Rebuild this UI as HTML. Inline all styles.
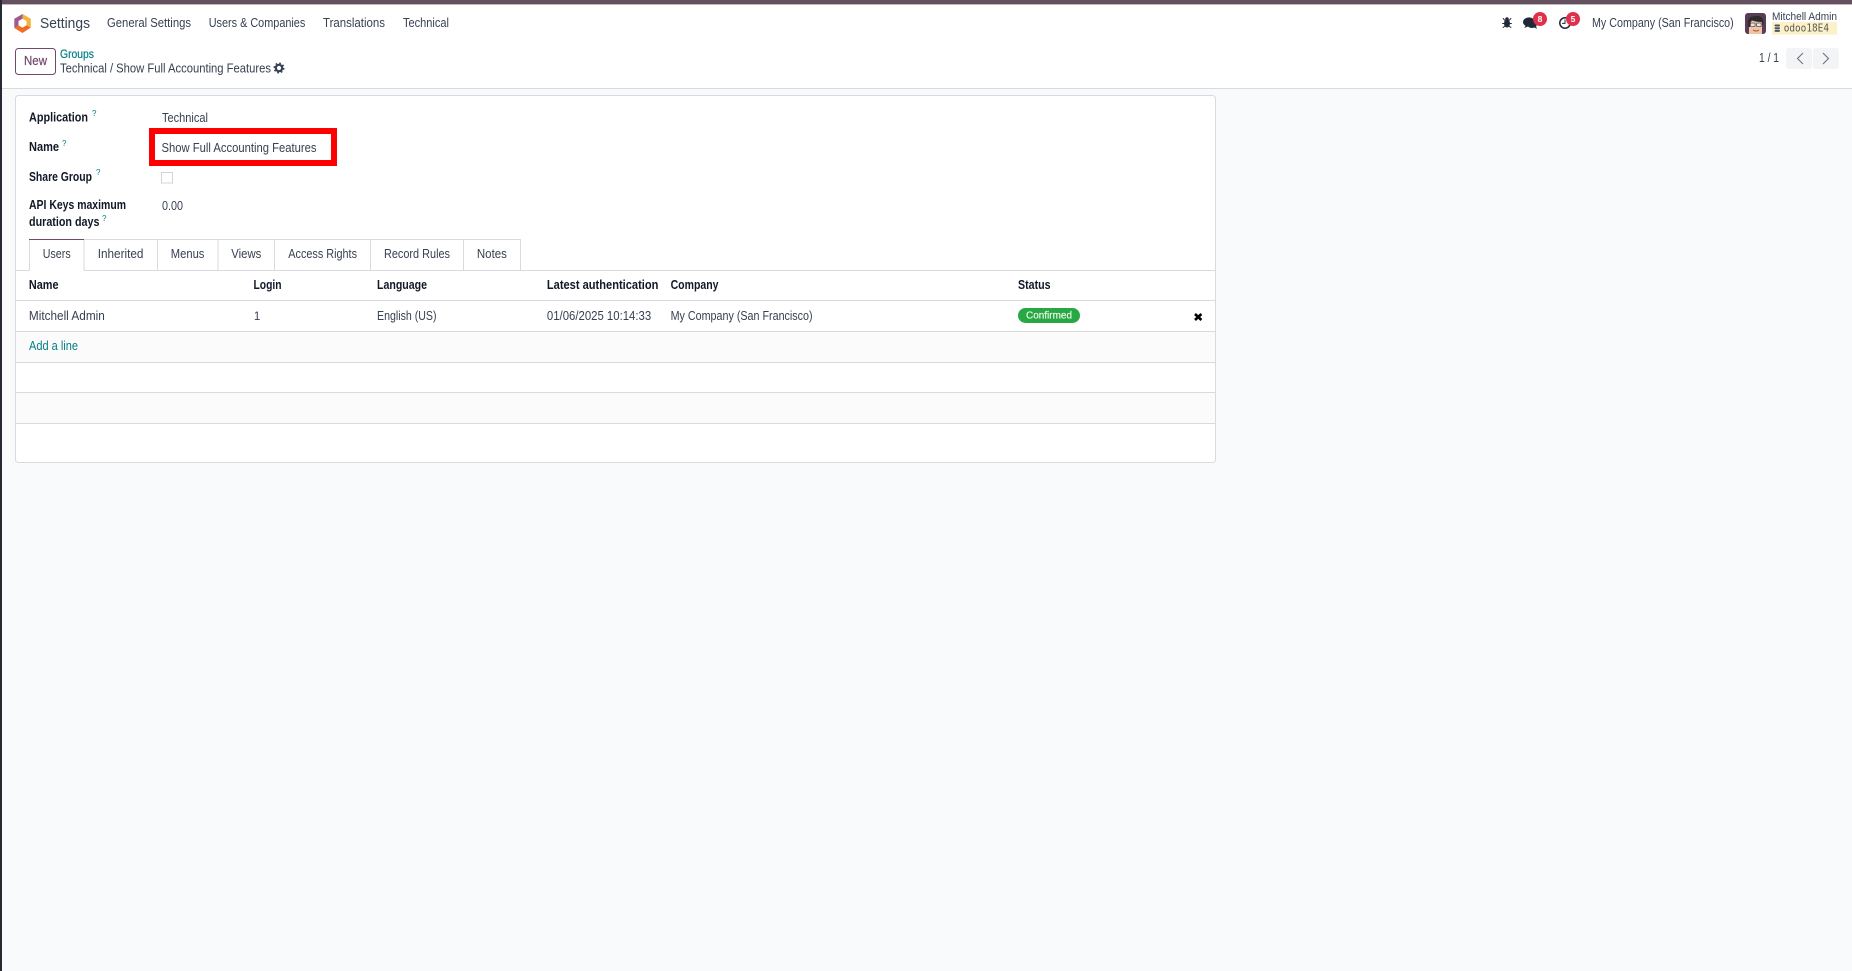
<!DOCTYPE html>
<html lang="en">
<head>
<meta charset="utf-8">
<title>Groups - Settings</title>
<style>
html,body{margin:0;padding:0;width:1852px;height:971px;overflow:hidden;background:#f9fafb}
svg{display:block;position:absolute;left:0;top:0}
text{font-family:"Liberation Sans",sans-serif;font-size:12.5px;fill:#374151}
.b{font-weight:bold;fill:#111827}
.n{font-size:12.5px;fill:#374151}
.l{fill:#017e84}
.q{font-size:8px;fill:#017e84}
</style>
</head>
<body>
<svg width="1852" height="971" viewBox="0 0 1852 971" xmlns="http://www.w3.org/2000/svg">
<rect width="1852" height="971" fill="#f9fafb"/>
<rect y="4" width="1852" height="84" fill="#fff"/>
<rect y="88" width="1852" height="1" fill="#d8dadd"/>
<rect width="1852" height="4.4" fill="#64505f"/>
<rect width="2" height="971" fill="#262a32"/>

<!-- logo -->
<path d="M22.5 14 L14.3 18.7 V28 L18.5 25.6 V21 L22.5 18.7 Z" fill="#a2588f"/>
<path d="M22.5 14 L30.8 18.7 V27.5 L26.5 25.4 V21 L22.5 18.7 Z" fill="#f4b23f"/>
<path d="M14.3 28 L22.5 33 L30.8 27.5 L26.5 25.2 L22.5 27.6 L18.5 25.4 Z" fill="#f26b22"/>

<text x="40" y="28" style="font-size:14.5px" textLength="50" lengthAdjust="spacingAndGlyphs">Settings</text>
<text class="n" x="107" y="27" textLength="84" lengthAdjust="spacingAndGlyphs">General Settings</text>
<text class="n" x="208.7" y="27" textLength="96.6" lengthAdjust="spacingAndGlyphs">Users &amp; Companies</text>
<text class="n" x="323" y="27" textLength="62" lengthAdjust="spacingAndGlyphs">Translations</text>
<text class="n" x="403" y="27" textLength="46" lengthAdjust="spacingAndGlyphs">Technical</text>

<!-- systray -->
<g fill="#1f2937">
<ellipse cx="1507" cy="23.5" rx="3" ry="4"/>
<circle cx="1507" cy="19" r="1.8"/>
<path d="M1502.8 18.2 L1505 20.5 M1511.2 18.2 L1509 20.5 M1502.2 23.5 H1504 M1511.8 23.5 H1510 M1502.8 27.8 L1505 26 M1511.2 27.8 L1509 26" stroke="#1f2937" stroke-width="1" fill="none"/>
</g>
<ellipse cx="1529" cy="22" rx="6" ry="4.6" fill="#1f2937"/>
<ellipse cx="1532" cy="24.4" rx="4.8" ry="3.6" fill="#1f2937"/>
<path d="M1526 25 l-1.8 3 l4-1.6z M1534 27 l2.8 2 l-.8-3.4z" fill="#1f2937"/>
<circle cx="1540" cy="19" r="7" fill="#e0304b"/>
<text x="1540" y="22" text-anchor="middle" style="font-size:8.5px;font-weight:bold;fill:#fff">8</text>
<circle cx="1565" cy="23" r="5.2" fill="none" stroke="#1f2937" stroke-width="1.5"/>
<path d="M1565 19.5 V23.4 H1562" fill="none" stroke="#1f2937" stroke-width="1"/>
<circle cx="1573" cy="19" r="7" fill="#e0304b"/>
<text x="1573" y="22" text-anchor="middle" style="font-size:8.5px;font-weight:bold;fill:#fff">5</text>
<text class="n" x="1592" y="27" textLength="141.7" lengthAdjust="spacingAndGlyphs">My Company (San Francisco)</text>

<!-- avatar -->
<rect x="1745" y="13" width="21" height="21" rx="3" fill="#5a3c56"/>
<path d="M1749 34 V24 Q1749 18 1755.5 18 Q1762 18 1762 24 V34 Z" fill="#f0c4a4"/>
<path d="M1748 27 Q1746.5 17 1753 16.5 Q1760 14.5 1763 19 Q1764 23 1763 26 L1761.5 22 Q1756 22 1752 20.5 Q1750 22 1750 27 Z" fill="#2f2a2d"/>
<rect x="1750.5" y="23" width="4.6" height="3.6" rx="1" fill="#e6e6e6" stroke="#55504f" stroke-width=".8"/>
<rect x="1756.6" y="23" width="4.6" height="3.6" rx="1" fill="#e6e6e6" stroke="#55504f" stroke-width=".8"/>
<path d="M1753 30 Q1756 32 1759 30" stroke="#a8503e" stroke-width="1" fill="none"/>

<text x="1772" y="20" style="font-size:11px" textLength="65" lengthAdjust="spacingAndGlyphs">Mitchell Admin</text>
<rect x="1772" y="22" width="65" height="12.7" fill="#fdf1c9"/>
<g fill="#4b5563">
<rect x="1774.5" y="24.5" width="5.5" height="2" rx="1"/>
<rect x="1774.5" y="27.2" width="5.5" height="2" rx="1"/>
<rect x="1774.5" y="29.9" width="5.5" height="2" rx="1"/>
</g>
<text x="1783.7" y="31.5" style="font-size:11px;fill:#5b5b52;font-family:'DejaVu Sans Mono',monospace" textLength="45.3" lengthAdjust="spacingAndGlyphs">odoo18E4</text>

<!-- control panel -->
<rect x="15.5" y="48.5" width="40" height="26" rx="3" fill="#fff" stroke="#71496b"/>
<text x="24" y="65" style="font-size:12.5px;fill:#71496b;stroke:#71496b;stroke-width:.2" textLength="23" lengthAdjust="spacingAndGlyphs">New</text>
<text x="60" y="58" style="font-size:12px;fill:#017e84;stroke:#017e84;stroke-width:.2" textLength="34" lengthAdjust="spacingAndGlyphs">Groups</text>
<text class="n" x="60" y="72.5" textLength="211" lengthAdjust="spacingAndGlyphs">Technical / Show Full Accounting Features</text>
<circle cx="279" cy="68" r="3.2" fill="none" stroke="#374151" stroke-width="2.2"/>
<circle cx="279" cy="68" r="4.8" fill="none" stroke="#374151" stroke-width="1.4" stroke-dasharray="1.8 1.97"/>

<text class="n" x="1759" y="62" textLength="20" lengthAdjust="spacingAndGlyphs">1 / 1</text>
<rect x="1786" y="48" width="26" height="21" rx="3" fill="#f3f4f6"/>
<rect x="1813" y="48" width="26" height="21" rx="3" fill="#f3f4f6"/>
<path d="M1803 53 L1797.5 58.5 L1803 64" fill="none" stroke="#6b7280" stroke-width="1.1"/>
<path d="M1823 53 L1828.5 58.5 L1823 64" fill="none" stroke="#6b7280" stroke-width="1.1"/>

<!-- card -->
<rect x="15.5" y="95.5" width="1200" height="367" rx="3" fill="#fff" stroke="#d8dadd"/>

<text class="b" x="29" y="121.5" textLength="59" lengthAdjust="spacingAndGlyphs">Application</text>
<text class="q" x="92" y="116">?</text>
<text class="n" x="162" y="122" textLength="46" lengthAdjust="spacingAndGlyphs">Technical</text>

<text class="b" x="29" y="151" textLength="30" lengthAdjust="spacingAndGlyphs">Name</text>
<text class="q" x="62" y="146">?</text>
<rect x="152" y="131" width="182" height="32" fill="none" stroke="#fe0000" stroke-width="6"/>
<text class="n" x="161.5" y="152" textLength="155" lengthAdjust="spacingAndGlyphs">Show Full Accounting Features</text>

<text class="b" x="29" y="181" textLength="63" lengthAdjust="spacingAndGlyphs">Share Group</text>
<text class="q" x="96" y="175">?</text>
<rect x="161.5" y="172.5" width="11" height="10.5" fill="#fff" stroke="#d1d5db"/>

<text class="b" x="29" y="209" textLength="97" lengthAdjust="spacingAndGlyphs">API Keys maximum</text>
<text class="b" x="29" y="226" textLength="70.5" lengthAdjust="spacingAndGlyphs">duration days</text>
<text class="q" x="102" y="221">?</text>
<text class="n" x="162" y="210" textLength="21" lengthAdjust="spacingAndGlyphs">0.00</text>

<!-- tabs -->
<g fill="none" stroke="#d8dadd">
<path d="M16 270.5 H29.5 M84 270.5 H1215"/>
<path d="M84 270.5 V239.5 H520.5 V270.5"/>
<path d="M157.5 239.5 V270.5 M218 239.5 V270.5 M274.5 239.5 V270.5 M370.5 239.5 V270.5 M463.5 239.5 V270.5"/>
<path d="M29.5 270.5 V239.5"/>
</g>
<rect x="29" y="239" width="55" height="1" fill="#71496b"/>
<text class="n" x="42.7" y="258" textLength="28" lengthAdjust="spacingAndGlyphs">Users</text>
<text class="n" x="97.7" y="258" textLength="45.8" lengthAdjust="spacingAndGlyphs">Inherited</text>
<text class="n" x="170.8" y="258" textLength="33.6" lengthAdjust="spacingAndGlyphs">Menus</text>
<text class="n" x="231.3" y="258" textLength="30" lengthAdjust="spacingAndGlyphs">Views</text>
<text class="n" x="288.3" y="258" textLength="68.7" lengthAdjust="spacingAndGlyphs">Access Rights</text>
<text class="n" x="384" y="258" textLength="66" lengthAdjust="spacingAndGlyphs">Record Rules</text>
<text class="n" x="476.9" y="258" textLength="30" lengthAdjust="spacingAndGlyphs">Notes</text>

<!-- table -->
<rect x="16" y="332" width="1199" height="30" fill="#fbfbfb"/>
<rect x="16" y="393" width="1199" height="30" fill="#fbfbfb"/>
<g fill="#d8dadd">
<rect x="16" y="300" width="1199" height="1"/>
<rect x="16" y="331" width="1199" height="1"/>
<rect x="16" y="362" width="1199" height="1"/>
<rect x="16" y="392" width="1199" height="1"/>
<rect x="16" y="423" width="1199" height="1"/>
</g>
<text class="b" x="28.9" y="289" textLength="29.6" lengthAdjust="spacingAndGlyphs">Name</text>
<text class="b" x="253.5" y="289" textLength="28" lengthAdjust="spacingAndGlyphs">Login</text>
<text class="b" x="377" y="289" textLength="50" lengthAdjust="spacingAndGlyphs">Language</text>
<text class="b" x="546.9" y="289" textLength="111.5" lengthAdjust="spacingAndGlyphs">Latest authentication</text>
<text class="b" x="670.6" y="289" textLength="47.9" lengthAdjust="spacingAndGlyphs">Company</text>
<text class="b" x="1018" y="289" textLength="32.6" lengthAdjust="spacingAndGlyphs">Status</text>

<text class="n" x="28.9" y="320" textLength="75.9" lengthAdjust="spacingAndGlyphs">Mitchell Admin</text>
<text class="n" x="253.9" y="320" style="font-size:11.5px">1</text>
<text class="n" x="377" y="320" textLength="59.5" lengthAdjust="spacingAndGlyphs">English (US)</text>
<text class="n" x="546.9" y="320" textLength="104.3" lengthAdjust="spacingAndGlyphs">01/06/2025 10:14:33</text>
<text class="n" x="670.6" y="320" textLength="142" lengthAdjust="spacingAndGlyphs">My Company (San Francisco)</text>
<rect x="1018" y="308" width="62" height="15" rx="7.5" fill="#28a745"/>
<text x="1026" y="318.5" style="font-size:10px;fill:#e8f7e0;stroke:#e8f7e0;stroke-width:.2" textLength="46" lengthAdjust="spacingAndGlyphs">Confirmed</text>
<path d="M1195 314 L1201.4 320 M1201.4 314 L1195 320" stroke="#000" stroke-width="2.6" fill="none"/>
<text class="l" x="29" y="350" textLength="49" lengthAdjust="spacingAndGlyphs">Add a line</text>
</svg>
</body>
</html>
